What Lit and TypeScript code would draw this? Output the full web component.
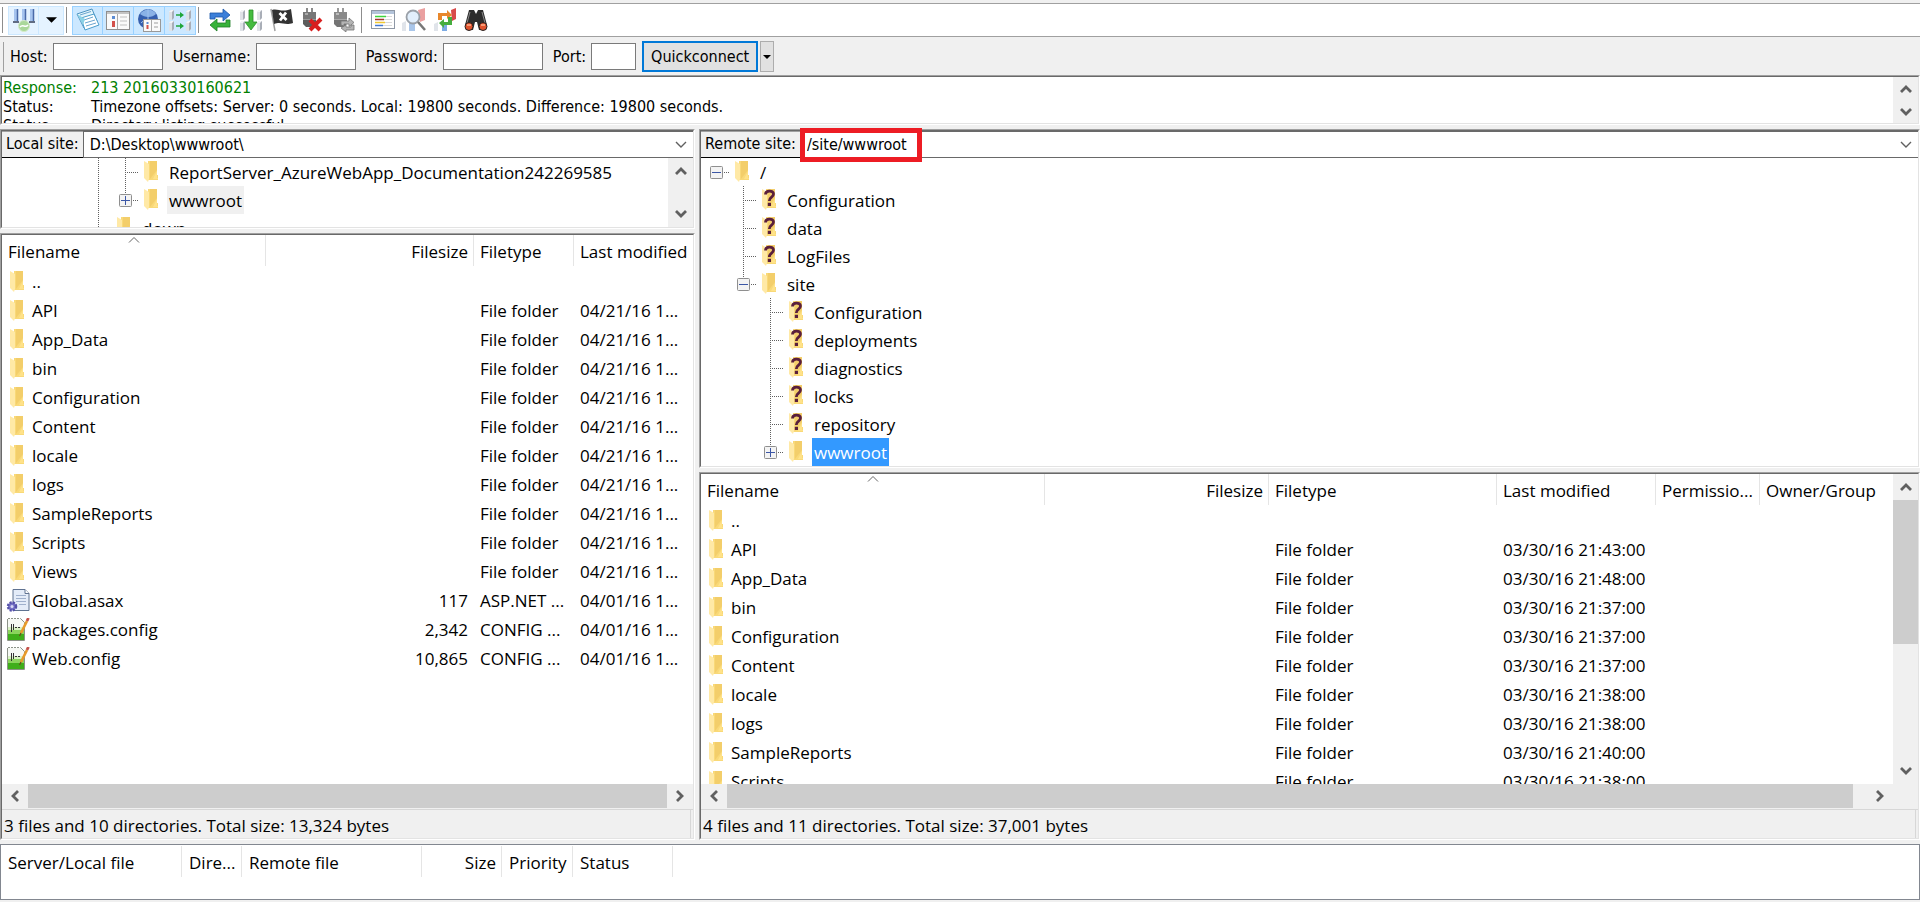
import { LitElement, html, svg, css, nothing } from "lit";
import { customElement, property } from "lit/decorators.js";

const icon = (body: unknown) => html`<svg class="icon" viewBox="0 0 24 24" width="24" height="24" aria-hidden="true">${body}</svg>`;

const folderShape = svg`
  <path d="M4 1h13v14h1v5H8V1z" fill="#f9d978"/>
  <path d="M10 1h7v9l-7 9z" fill="#f3ce6a"/>
  <path d="M4 1l5 3v15l-1 3-4-4z" fill="#ffe9a6"/>
  <path d="M13 19l4-8v7h1v1z" fill="#ffe289"/>`;

const server = (x: number, y: number) => svg`
  <path d="M${x} ${y + 2}l2-2h3v8l-2 2h-3z" fill="#dfe2e7"/>
  <path d="M${x} ${y + 2}l2-2h3l-2 2z" fill="#f3f4f7"/>
  <path d="M${x + 3} ${y + 2}l2-2v8l-2 2z" fill="#a9aeb7"/>`;

const icons: Record<string, unknown> = {
  folder: icon(folderShape),
  unknown: icon(svg`${folderShape}
    <path d="M7.500 6.500c0-4.500 8-4.500 8-.5 0 3.400-4.200 2.800-4.200 7" fill="none" stroke="#5a1f3c" stroke-width="2.800"/>
    <path d="M9.800 14.800h3.200v3.200h-3.200z" fill="#5a1f3c"/>`),
  asax: icon(svg`
    <path d="M7 .5h12l4 4v17H7z" fill="#e4ecf8" stroke="#5f7290"/>
    <path d="M19 .5v4h4" fill="#fff" stroke="#5f7290"/>
    <path d="M10 6.500h10M10 9.500h10M10 12.500h10M13 15.500h7" stroke="#9fb0cc"/>
    <circle cx="6" cy="17.500" r="4" fill="#7773c8" stroke="#5450a8" stroke-width="2.500" stroke-dasharray="2 1.200"/>
    <circle cx="6" cy="17.500" r="1.500" fill="#d8d8f4"/>`),
  config: icon(svg`
    <path d="M1.500 .5h13l4 4v18h-17z" fill="#f6f8f4" stroke="#8c9288"/>
    <path d="M1 .5h14" stroke="#fff" stroke-dasharray="1 2"/>
    <path d="M2 9h16v4H2z" fill="#d9f2c4"/><path d="M2 12h16v5H2z" fill="#8ad45c"/><path d="M2 16h16v6H2z" fill="#3fae1a"/>
    <path d="M5.500 6v8M7.500 6v6M9 9.500h2M12 9.500h2" stroke="#333"/>
    <path d="M21 3l-6 12" stroke="#e79a2b" stroke-width="2.600"/>
    <path d="M22.400 0l-1.400 3" stroke="#c5524a" stroke-width="2.800"/>
    <path d="M15 15l-1.500 3" stroke="#6b4c1c" stroke-width="1.200"/>`),
  sites: icon(svg`
    <path d="M2 1h4v12H2zM10 1h4v12h-4zM18 1h4v12h-4z" fill="#a6c4ee"/>
    <path d="M5.500 1v12M13.500 1v12M21.500 1v12" stroke="#4a6aa8" stroke-width="1.500"/>
    <path d="M1 14h6M9 14h6M17 14h6" stroke="#35405a" stroke-width="1.500"/>
    <circle cx="12" cy="18" r="5.500" fill="#a9d79a" stroke="#d5ecc9"/>
    <path d="M8 19c3-4 5 2 8-2" stroke="#fff" fill="none" stroke-width="1.500"/>`),
  log: icon(svg`
    <path d="M1 6l15-5 5 12-13 7z" fill="#e4f5fb" stroke="#4d93c0"/>
    <path d="M5 10l13-4 5 11-14 5z" fill="#fff" stroke="#4a9ccb"/>
    <path d="M4 7l11-3.500M8 12l9-3M9 15l10-3M10 18l10-3" stroke="#69a4cf"/>
    <path d="M1 6l6 11 2-6z" fill="#8cd2e6"/>`),
  localTree: icon(svg`
    <rect x=".5" y="3.500" width="23" height="18" fill="#fafafa" stroke="#8f8f8f"/>
    <path d="M1 5h22" stroke="#c4c4c4" stroke-width="2"/><path d="M11.500 6v15" stroke="#aaa"/>
    <path d="M7.500 8v3" stroke="#5b8bd2" stroke-width="3"/><path d="M7.500 13v6" stroke="#d3504a" stroke-width="3"/>
    <path d="M14 9h7M14 13h7M14 17h7" stroke="#ddd" stroke-width="2"/>`),
  remoteTree: icon(svg`
    <circle cx="11" cy="11" r="10" fill="#355fae"/>
    <path d="M3 6c4-6 13-6 16 0-4 4-11 4-16 0z" fill="#8ab2e6"/>
    <path d="M11 1v14M4 15c3-3 5-3 8-3" stroke="#9fc2ee" fill="none"/>
    <rect x="6.500" y="11.500" width="17" height="12" fill="#fafafa" stroke="#999"/>
    <path d="M14.500 12v11" stroke="#aaa"/><path d="M10.500 14v2" stroke="#5b8bd2" stroke-width="2"/>
    <path d="M10.500 17v4" stroke="#d3504a" stroke-width="2"/><path d="M17 15h4M17 19h4" stroke="#ccc" stroke-width="2"/>`),
  queue: icon(svg`${server(1, 2)}${server(18, 2)}${server(1, 13)}${server(18, 13)}
    <path d="M8 7h5M8 18h5" stroke="#20a53a" stroke-width="1.500"/>
    <path d="M12 4l4 3-4 3zM12 15l4 3-4 3z" fill="#20a53a"/>`),
  refresh: icon(svg`
    <path d="M2 11V5h13V1l7 6-7 6V9H7v2z" fill="#3b7fd9" stroke="#1b56a8" stroke-width=".8"/>
    <path d="M22 12v7H9v4l-7-6 7-6v4h9v-3z" fill="#37b23a" stroke="#1d7e23" stroke-width=".8"/>`),
  process: icon(svg`${server(1, 2)}${server(18, 2)}${server(1, 13)}${server(18, 13)}
    <path d="M10 2h4v12h4l-6 8-6-8h4z" fill="#45bb3f" stroke="#2a8d2a" stroke-width=".8"/>`),
  flag: icon(svg`
    <path d="M1 1l4 22" stroke="#a0a0a0" stroke-width="1.500"/>
    <path d="M2 2c6-2 9 3 19-1l2 14c-9 3-11-2-19 1z" fill="#333"/>
    <path d="M9.500 5l7 7M16 4.500l-6 8" stroke="#fff" stroke-width="2.800"/>`),
  disconnect: icon(svg`
    <path d="M6 0v4M11 0v4" stroke="#8a8a8a" stroke-width="2"/>
    <path d="M2 4h13v8H2z" fill="#777"/><path d="M2 12h13v4l-3 3H5l-3-3z" fill="#5c5c5c"/>
    <path d="M4 6h3" stroke="#aaa" stroke-width="2"/><path d="M2 11.500h13" stroke="#999"/>
    <path d="M9 12l10 10M20 11L9 22" stroke="#d81e1e" stroke-width="4"/>`),
  reconnect: icon(svg`
    <path d="M6 0v4M11 0v4" stroke="#9a9a9a" stroke-width="2"/>
    <path d="M2 4h13v8H2z" fill="#8a8a8a"/><path d="M2 12h13v4l-3 3H5l-3-3z" fill="#747474"/>
    <path d="M4 6h3" stroke="#bbb" stroke-width="2"/><path d="M2 11.500h13" stroke="#aaa"/>
    <path d="M9 17v-4h8v-3l5 4.500-5 4V16h-5v2zM22 17v5h-8v2l-5-4 5-3v2h5v-2z" fill="#b4b4b4" stroke="#777" stroke-width=".8"/>`),
  filter: icon(svg`
    <rect x=".5" y="2.500" width="23" height="18" fill="#fff" stroke="#8e98a6"/>
    <path d="M1 4.500h22" stroke="#b4c4da" stroke-width="3"/>
    <path d="M4 8.500h11" stroke="#3dd53d" stroke-width="1.500"/><path d="M4 11.500h9" stroke="#a3352e" stroke-width="1.500"/>
    <path d="M4 14.500h10" stroke="#f0c831" stroke-width="1.500"/><path d="M4 17.500h8" stroke="#4178d4" stroke-width="1.500"/>
    <path d="M15 8.500h6M13 11.500h8M14 14.500h7M12 17.500h9" stroke="#d8d8d8"/>`),
  compare: icon(svg`
    <path d="M16 2l7-2v12l-5 2z" fill="#eaa0a0"/><path d="M0 15l4-2v10H0z" fill="#e0e4ea"/><path d="M7 15h6v8H7z" fill="#a9c6ea"/>
    <circle cx="11" cy="9" r="6.500" fill="#e2effc" stroke="#9aa0a8" stroke-width="1.800"/>
    <path d="M16 14l7 8" stroke="#777" stroke-width="2.500"/>`),
  sync: icon(svg`
    <path d="M18 2l5-2v11l-4 2z" fill="#d84a4a"/><path d="M1 16l4-2v9H1z" fill="#e0e4ea"/><path d="M9 15h5v8H9z" fill="#7cabe4"/>
    <path d="M5 12V5h9V2l5 5-5 4V8H9v4z" fill="#e8872b"/>
    <path d="M19 9v8h-8v3l-5-5 5-4v3h4V9z" fill="#46ac3f"/>`),
  find: icon(svg`
    <path d="M5 2h5l2 4 2-4h5l4 15-1 5h-7l-2-8h-2l-2 8H2l-1-5z" fill="#2c2c2c"/>
    <path d="M6 4l-3 11M18 4l3 11" stroke="#888"/>
    <circle cx="5" cy="18.500" r="4" fill="#e0532d" stroke="#222"/><circle cx="19" cy="18.500" r="4" fill="#e0532d" stroke="#222"/>
    <path d="M3 17h4M17 17h4" stroke="#ffb38c" stroke-width="1.500"/>`),
};

const chevrons: Record<string, string> = {
  up: "M1 9l5-5 5 5",
  down: "M1 3l5 5 5-5",
  left: "M9 1L4 6l5 5",
  right: "M3 1l5 5-5 5",
};

const arrow = (dir: string, thin = false) => html`<svg viewBox="0 0 12 12" width="12" height="12" aria-hidden="true">
  <path d=${chevrons[dir]} fill="none" stroke="#606060" stroke-width=${thin ? 1.4 : 2.8}></path></svg>`;

const scrollbar = (axis: "h" | "v", thumb?: [number, number]) => {
  const [first, last] = axis === "h" ? ["left", "right"] : ["up", "down"];
  return html`<div class="scroll ${axis}">
    <button type="button" aria-label="Scroll ${first}">${arrow(first)}</button>
    <div class="track">${thumb
      ? html`<div class="thumb" style="flex:${thumb[0]}"></div><div style="flex:${thumb[1]}"></div>`
      : nothing}</div>
    <button type="button" aria-label="Scroll ${last}">${arrow(last)}</button>
  </div>`;
};

const shared = css`
  * { box-sizing: border-box; }
  button { font: inherit; padding: 0; border: 0; background: none; color: inherit; }
  .icon { display: block; flex: none; }
  .scroll { display: flex; background: #f0f0f0; }
  .scroll button { flex: none; display: flex; align-items: center; justify-content: center; width: 26px; height: 26px; }
  .scroll.h { height: 24px; }
  .scroll.h button { height: 24px; }
  .scroll.v { flex-direction: column; width: 25px; }
  .scroll.v button { width: 25px; }
  .track { flex: 1; display: flex; min-height: 0; }
  .v .track { flex-direction: column; }
  .thumb { background: #cdcdcd; }
  .sunken { border: 1px solid; border-color: #a0a0a0 #fff #fff #a0a0a0; display: flex; min-height: 0; min-width: 0; }
  .inner { border: 1px solid; border-color: #696969 #e3e3e3 #e3e3e3 #696969; background: #fff; flex: 1; display: flex; min-width: 0; min-height: 0; }
`;

type Column = { title: string; width?: number; right?: boolean; sorted?: boolean };
type FileRow = { icon: string; cells: string[] };

@customElement("file-table")
class FileTable extends LitElement {
  @property({ attribute: false }) columns: Column[] = [];
  @property({ attribute: false }) rows: FileRow[] = [];

  static styles = [shared, css`
    :host { display: block; min-width: 0; min-height: 0; overflow: hidden; }
    table { width: 100%; border-collapse: separate; border-spacing: 0; table-layout: fixed; }
    th, td { padding: 0 6px; text-align: left; font-weight: 400; white-space: nowrap; overflow: hidden; }
    th { height: 32px; position: relative; vertical-align: top; line-height: 34px; }
    th:not(.open) { background: linear-gradient(#e5e5e5, #e5e5e5) right top / 1px 31px no-repeat; }
    th > span { display: block; height: 32px; }
    td { height: 29px; line-height: 29px; }
    .right { text-align: right; }
    .name { display: flex; align-items: center; gap: 2px; }
    td:first-child { padding-left: 4px; }
    .sort { position: absolute; top: 1px; left: 50%; margin-left: -6px; display: block; }
  `];

  render() {
    return html`<table>
      <colgroup>${this.columns.map((c) => html`<col style=${c.width ? `width:${c.width}px` : ""}>`)}</colgroup>
      <thead><tr>${this.columns.map((c) => html`<th class="${c.right ? "right" : ""} ${c.width ? "" : "open"}"><span>${c.title}</span>${c.sorted
        ? html`<svg class="sort" viewBox="0 0 12 8" width="12" height="8"><path d="M1 6.500l5-5 5 5" fill="none" stroke="#666"></path></svg>`
        : nothing}</th>`)}</tr></thead>
      <tbody>${this.rows.map((r) => html`<tr>${this.columns.map((c, i) => html`<td class=${c.right ? "right" : ""}>${i === 0
        ? html`<div class="name">${icons[r.icon]}<span>${r.cells[0]}</span></div>`
        : r.cells[i]}</td>`)}</tr>`)}</tbody>
    </table>`;
  }
}

type TreeNode = { rails: string[]; icon: string; label: string; state?: "active" | "inactive" };

/* Rail kinds: blank, pass (line goes through), tee (branch), root / minusEnd / plusEnd (expander box). */
const rail = (kind: string) => {
  const box = kind === "root" || kind === "minusEnd" || kind === "plusEnd";
  const dots = (d: string) => svg`<path d=${d} stroke="#606060" stroke-dasharray="1 1"/>`;
  return html`<svg class="rail" viewBox="0 0 27 28" width="27" height="28" aria-hidden="true">
    ${kind === "pass" || kind === "tee" ? dots("M13.5 0v28") : nothing}
    ${kind === "minusEnd" || kind === "plusEnd" ? dots("M13.5 0v14") : nothing}
    ${kind === "tee" || box ? dots("M13 14.5H27") : nothing}
    ${box ? svg`<rect x="7.500" y="8.500" width="12" height="12" rx="1" fill="#f3f3f3" stroke="#8f8f8f"/>
      <path d="M9 14.500h9" stroke="#3c57a6"/>` : nothing}
    ${kind === "plusEnd" ? svg`<path d="M13.500 10v9" stroke="#3c57a6"/>` : nothing}
  </svg>`;
};

@customElement("folder-tree")
class FolderTree extends LitElement {
  @property({ attribute: false }) nodes: TreeNode[] = [];

  static styles = [shared, css`
    :host { display: block; overflow: hidden; min-width: 0; min-height: 0; }
    ul { list-style: none; margin: 0; padding: 0 0 0 2px; }
    li { display: flex; align-items: center; height: 28px; white-space: nowrap; }
    .rail { flex: none; display: block; }
    .label { height: 28px; line-height: 30px; padding: 0 2px; margin-left: 3px; }
    .icon { margin-left: 1px; }
    .active { background: #3399ff; color: #fff; }
    .inactive { background: #f0f0f0; }
  `];

  render() {
    return html`<ul>${this.nodes.map((n) => html`<li>${n.rails.map(rail)}${icons[n.icon]}<span class="label ${n.state ?? ""}">${n.label}</span></li>`)}</ul>`;
  }
}

@customElement("site-pane")
class SitePane extends LitElement {
  @property() label = "";
  @property() path = "";
  @property() status = "";
  @property({ type: Boolean, reflect: true }) remote = false;
  @property({ type: Boolean }) marked = false;
  @property({ attribute: false }) nodes: TreeNode[] = [];
  @property({ attribute: false }) columns: Column[] = [];
  @property({ attribute: false }) rows: FileRow[] = [];

  static styles = [shared, css`
    :host { display: grid; grid-template-rows: 100px minmax(0, 1fr); gap: 4px; min-width: 0; min-height: 0; }
    :host([remote]) { grid-template-rows: 339px minmax(0, 1fr); }
    .inner { flex-direction: column; }
    .bar { display: flex; flex: none; height: 27px; font: 16px/24px var(--dialog); }
    label { background: #f0f0f0; padding: 0 4px; border-top: 1px solid #a0a0a0; border-bottom: 1px solid #000; }
    .combo { flex: 1; display: grid; grid-template-columns: minmax(0, 1fr) 24px; align-items: center; border: 1px solid #696969; border-right: 0; position: relative; }
    select { grid-area: 1 / 1 / 2 / 3; appearance: none; border: 0; border-radius: 0; outline: 0; background: #fff; color: #000; font: inherit; height: 25px; padding: 0 0 0 6px; }
    .chevron { grid-area: 1 / 2; display: flex; justify-content: center; pointer-events: none; }
    .marker { position: absolute; left: -1px; top: -4px; width: 122px; height: 34px; border: 5px solid #ed1c24; pointer-events: none; }
    .body { flex: 1; display: flex; min-height: 0; }
    .body > :first-child { flex: 1; }
    .status { flex: none; height: 29px; border-top: 1px solid #d7d7d7; background: #f0f0f0; padding: 0 2px; line-height: 31px; display: flex; }
    .status span { flex: 1; border-right: 1px solid #d7d7d7; }
    .foot { display: flex; background: #f0f0f0; padding-bottom: 1px; }
    .foot > .scroll { flex: 1; }
    :host([remote]) .foot { padding-right: 25px; }
  `];

  render() {
    return html`
      <section class="sunken"><div class="inner">
        <div class="bar">
          <label for="path">${this.label}</label>
          <div class="combo">
            <select id="path"><option>${this.path}</option></select>
            <span class="chevron">${arrow("down", true)}</span>
            ${this.marked ? html`<span class="marker"></span>` : nothing}
          </div>
        </div>
        <div class="body"><folder-tree .nodes=${this.nodes}></folder-tree>${this.remote ? nothing : scrollbar("v")}</div>
      </div></section>
      <section class="sunken"><div class="inner">
        <div class="body">
          <file-table .columns=${this.columns} .rows=${this.rows}></file-table>
          ${this.remote ? scrollbar("v", [145, 114]) : nothing}
        </div>
        <div class="foot">${this.remote ? scrollbar("h", [1125, 14]) : scrollbar("h", [1, 0])}</div>
        <div class="status"><span>${this.status}</span></div>
      </div></section>`;
  }
}

const folder = (...cells: string[]): FileRow => ({ icon: "folder", cells });
const localNames = ["API", "App_Data", "bin", "Configuration", "Content", "locale", "logs", "SampleReports", "Scripts", "Views"];
const localRows: FileRow[] = [
  folder("..", "", "", ""),
  ...localNames.map((n) => folder(n, "", "File folder", "04/21/16 1...")),
  { icon: "asax", cells: ["Global.asax", "117", "ASP.NET ...", "04/01/16 1..."] },
  { icon: "config", cells: ["packages.config", "2,342", "CONFIG ...", "04/01/16 1..."] },
  { icon: "config", cells: ["Web.config", "10,865", "CONFIG ...", "04/01/16 1..."] },
];
const remoteRows: FileRow[] = [
  folder("..", "", "", "", "", ""),
  ...([["API", "43"], ["App_Data", "48"], ["bin", "37"], ["Configuration", "37"], ["Content", "37"], ["locale", "38"], ["logs", "38"], ["SampleReports", "40"], ["Scripts", "38"]]
    .map(([n, m]) => folder(n, "", "File folder", `03/30/16 21:${m}:00`, "", ""))),
];
const localColumns: Column[] = [
  { title: "Filename", width: 264, sorted: true }, { title: "Filesize", width: 208, right: true },
  { title: "Filetype", width: 100 }, { title: "Last modified" },
];
const remoteColumns: Column[] = [
  { title: "Filename", width: 344, sorted: true }, { title: "Filesize", width: 224, right: true }, { title: "Filetype", width: 228 },
  { title: "Last modified", width: 159 }, { title: "Permissio...", width: 104 }, { title: "Owner/Group" },
];
const localNodes: TreeNode[] = [
  { rails: ["blank", "blank", "blank", "pass", "tee"], icon: "folder", label: "ReportServer_AzureWebApp_Documentation242269585" },
  { rails: ["blank", "blank", "blank", "pass", "plusEnd"], icon: "folder", label: "wwwroot", state: "inactive" },
  { rails: ["blank", "blank", "blank", "pass"], icon: "folder", label: "down" },
];
const remoteNodes: TreeNode[] = [
  { rails: ["root"], icon: "folder", label: "/" },
  ...["Configuration", "data", "LogFiles"].map((label) => ({ rails: ["blank", "tee"], icon: "unknown", label })),
  { rails: ["blank", "minusEnd"], icon: "folder", label: "site" },
  ...["Configuration", "deployments", "diagnostics", "locks", "repository"].map((label) => ({ rails: ["blank", "blank", "tee"], icon: "unknown", label })),
  { rails: ["blank", "blank", "plusEnd"], icon: "folder", label: "wwwroot", state: "active" as const },
];

const tool = (name: string, title: string, on = false) =>
  html`<button type="button" class="tool ${on ? "on" : ""}" aria-label=${title}>${icons[name]}</button>`;
const caret = html`<svg viewBox="0 0 12 6" width="12" height="6" aria-hidden="true"><path d="M0 0h12l-6 6z"></path></svg>`;

@customElement("app-root")
class AppRoot extends LitElement {
  static styles = [shared, css`
    :host {
      --ui: "Open Sans", "Noto Sans", sans-serif;
      --dialog: "DejaVu Sans Condensed", "Open Sans", sans-serif;
      display: flex; flex-direction: column; height: 100vh; overflow: hidden;
      background: #f0f0f0; color: #000; font: 17px/24px var(--ui);
    }
    .toolbar { flex: none; display: flex; align-items: center; height: 34px; margin-top: 3px; padding-left: 2px; background: #fff; border-top: 1px solid #a0a0a0; border-bottom: 1px solid #a0a0a0; }
    .sep { width: 1px; height: 26px; background: #8d8d8d; }
    .group { display: flex; margin: 0 2px 0 5px; }
    .tool { width: 31px; height: 29px; display: flex; align-items: center; justify-content: center; }
    .on { background: #cce8ff; border: 1px solid #99d1ff; }
    .on + .on { border-left: 0; }
    .hot { background: #e5f3ff; border: 1px solid #cce8ff; }
    .drop { width: 25px; border-left: 0; }
    .drop svg { width: 11px; }
    .quick { flex: none; display: flex; align-items: center; height: 38px; padding: 1px 0 0 3px; font-family: var(--dialog); font-size: 16px; }
    .quick .sep { height: 30px; margin-right: 6px; background: #a0a0a0; }
    .quick label { display: block; white-space: nowrap; }
    .quick input { height: 27px; margin: 0 10px 0 5px; padding: 0 3px; border: 1px solid #7a7a7a; border-radius: 0; background: #fff; font: inherit; }
    .host { width: 110px; }
    .cred { width: 100px; }
    .quick .port { width: 45px; margin-right: 6px; }
    .connect { width: 116px; height: 31px; background: #e1e1e1; border: 2px solid #0078d7; }
    .more { width: 14px; height: 31px; margin-left: 2px; background: #e1e1e1; border: 1px solid #adadad; display: flex; align-items: center; justify-content: center; }
    .more svg { width: 8px; height: 4px; }
    .log { flex: none; height: 50px; font-family: var(--dialog); font-size: 16px; line-height: 19px; }
    .lines { flex: 1; display: grid; grid-template-columns: 88px minmax(0, 1fr); grid-auto-rows: 19px; padding: 1px 0 0 1px; overflow: hidden; white-space: nowrap; }
    .response { color: #008000; }
    .log .scroll button { height: 23px; }
    .panes { flex: 1; display: grid; grid-template-columns: minmax(0, 695fr) minmax(0, 1221fr); gap: 4px; margin: 4px 0; min-height: 0; }
    .queue { flex: none; height: 56px; margin-bottom: 2px; border: 1px solid #828790; background: #fff; }
    .queue table { table-layout: fixed; width: 672px; border-collapse: collapse; }
    .queue th { padding: 0 6px 0 7px; height: 36px; line-height: 36px; text-align: left; font-weight: 400; white-space: nowrap; background: linear-gradient(#e5e5e5, #e5e5e5) right 1px / 1px 31px no-repeat; }
    .queue th:nth-child(4) { text-align: right; }
    .queue th { background-position: right 1px; }
  `];

  render() {
    return html`
      <header class="toolbar">
        <span class="sep"></span>
        <div class="group">
          <button type="button" class="tool hot" aria-label="Site Manager">${icons.sites}</button>
          <button type="button" class="tool hot drop" aria-label="Saved sites">${caret}</button>
        </div>
        <span class="sep"></span>
        <div class="group">${tool("log", "Message log", true)}${tool("localTree", "Local tree", true)}${tool("remoteTree", "Remote tree", true)}${tool("queue", "Transfer queue", true)}</div>
        <span class="sep"></span>
        <div class="group">${tool("refresh", "Refresh")}${tool("process", "Process queue")}${tool("flag", "Cancel")}${tool("disconnect", "Disconnect")}${tool("reconnect", "Reconnect")}</div>
        <span class="sep"></span>
        <div class="group">${tool("filter", "Filters")}${tool("compare", "Compare directories")}${tool("sync", "Synchronized browsing")}${tool("find", "Search")}</div>
      </header>
      <form class="quick">
        <span class="sep"></span>
        <label for="host">Host:</label><input id="host" class="host" type="text">
        <label for="user">Username:</label><input id="user" class="cred" type="text">
        <label for="pass">Password:</label><input id="pass" class="cred" type="password">
        <label for="port">Port:</label><input id="port" class="port" type="text">
        <button type="button" class="connect">Quickconnect</button>
        <button type="button" class="more" aria-label="Recent servers">${caret}</button>
      </form>
      <section class="sunken log"><div class="inner">
        <div class="lines">
          <span class="response">Response:</span><span class="response">213 20160330160621</span>
          <span>Status:</span><span>Timezone offsets: Server: 0 seconds. Local: 19800 seconds. Difference: 19800 seconds.</span>
          <span>Status:</span><span>Directory listing successful</span>
        </div>
        ${scrollbar("v")}
      </div></section>
      <main class="panes">
        <site-pane label="Local site:" path="D:\\Desktop\\wwwroot\\" status="3 files and 10 directories. Total size: 13,324 bytes"
          .nodes=${localNodes} .columns=${localColumns} .rows=${localRows}></site-pane>
        <site-pane remote marked label="Remote site:" path="/site/wwwroot" status="4 files and 11 directories. Total size: 37,001 bytes"
          .nodes=${remoteNodes} .columns=${remoteColumns} .rows=${remoteRows}></site-pane>
      </main>
      <footer class="queue">
        <table>
          <colgroup>${[181, 60, 180, 80, 71, 100].map((w) => html`<col style="width:${w}px">`)}</colgroup>
          <thead><tr>${["Server/Local file", "Dire...", "Remote file", "Size", "Priority", "Status"].map((t) => html`<th>${t}</th>`)}</tr></thead>
        </table>
      </footer>`;
  }
}
